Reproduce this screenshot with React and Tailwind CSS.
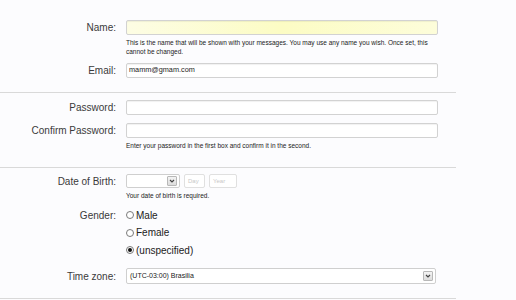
import React from "react";

function Arrow() {
  return (
    <div className="absolute right-[2px] top-1/2 -translate-y-1/2 w-[10px] h-[10px] border border-[#b8b8b8] rounded-[1px] bg-gradient-to-b from-[#f4f4f4] to-[#dcdcdc] flex items-center justify-center">
      <svg width="6" height="4" viewBox="0 0 6 4">
        <polyline points="1,1 3,3 5,1" fill="none" stroke="#444" strokeWidth="1.2" />
      </svg>
    </div>
  );
}

function Label({ children, h = "h-[15px]" }) {
  return (
    <div className={`w-[116px] shrink-0 ${h} flex items-center justify-end text-[10px] text-[#3a3a3a]`}>
      {children}
    </div>
  );
}

function Input({ children, yellow }) {
  return (
    <div
      className={`h-[15px] w-[312px] border border-[#d2d2d2] rounded-[2px] shadow-[inset_0_1px_1px_rgba(0,0,0,0.06)] flex items-center px-[2px] text-[7.3px] text-[#222] ${
        yellow ? "bg-gradient-to-r from-[#fdfde4] via-[#fcfcc4] to-[#fdfdda]" : "bg-white"
      }`}
    >
      {children}
    </div>
  );
}

function Help({ children }) {
  return <div className="mt-[3px] text-[6.5px] leading-[9px] text-[#222] w-[312px]">{children}</div>;
}

function Divider({ mt }) {
  return <div className={`${mt} h-px w-[456px] bg-[#d9d9d9]`} />;
}

function Radio({ checked, children }) {
  return (
    <div className="h-[17.5px] flex items-center text-[10px] text-[#222]">
      <div className="shrink-0 w-[8px] h-[8px] rounded-full border border-[#7a7a7a] bg-white flex items-center justify-center">
        {checked && <div className="w-[4px] h-[4px] rounded-full bg-[#111]" />}
      </div>
      <span className="ml-[2px]">{children}</span>
    </div>
  );
}

export default function App() {
  return (
    <div
      className="w-[516px] h-[300px] bg-[#fcfcfe] overflow-hidden pt-[20px]"
      style={{ fontFamily: '"Liberation Sans", Arial, sans-serif' }}
    >
      <div className="flex">
        <Label>Name:</Label>
        <div className="ml-[10px]">
          <Input yellow />
          <Help>
            This is the name that will be shown with your messages. You may use any name you wish. Once set, this
            cannot be changed.
          </Help>
        </div>
      </div>

      <div className="flex mt-[6.5px]">
        <Label>Email:</Label>
        <div className="ml-[10px]">
          <Input>mamm@gmam.com</Input>
        </div>
      </div>

      <Divider mt="mt-[14px]" />

      <div className="flex mt-[7px]">
        <Label>Password:</Label>
        <div className="ml-[10px]">
          <Input />
        </div>
      </div>

      <div className="flex mt-[8px]">
        <Label>Confirm Password:</Label>
        <div className="ml-[10px]">
          <Input />
          <Help>Enter your password in the first box and confirm it in the second.</Help>
        </div>
      </div>

      <Divider mt="mt-[17.5px]" />

      <div className="flex mt-[6px]">
        <Label h="h-[14px]">Date of Birth:</Label>
        <div className="ml-[10px]">
          <div className="flex gap-[4px]">
            <div className="relative h-[14px] w-[54px] border border-[#cfcfcf] rounded-[2px] bg-white">
              <Arrow />
            </div>
            <div className="h-[14px] w-[21px] border border-[#e0e0e0] rounded-[2px] bg-white flex items-center px-[3px] text-[6px] text-[#c8c8c8]">
              Day
            </div>
            <div className="h-[14px] w-[28px] border border-[#e0e0e0] rounded-[2px] bg-white flex items-center px-[3px] text-[6px] text-[#c8c8c8]">
              Year
            </div>
          </div>
          <div className="mt-[2.5px] text-[6.5px] leading-[9px] text-[#222]">Your date of birth is required.</div>
        </div>
      </div>

      <div className="flex mt-[7px]">
        <Label h="h-[17.5px]">Gender:</Label>
        <div className="ml-[10px]">
          <Radio>Male</Radio>
          <Radio>Female</Radio>
          <Radio checked>(unspecified)</Radio>
        </div>
      </div>

      <div className="flex mt-[9px]">
        <Label h="h-[16px]">Time zone:</Label>
        <div className="ml-[10px]">
          <div className="relative h-[16px] w-[310px] border border-[#cfcfcf] rounded-[2px] bg-white flex items-center px-[3px] text-[7px] text-[#222]">
            (UTC-03:00) Brasilia
            <Arrow />
          </div>
        </div>
      </div>

      <Divider mt="mt-[14px]" />
    </div>
  );
}
